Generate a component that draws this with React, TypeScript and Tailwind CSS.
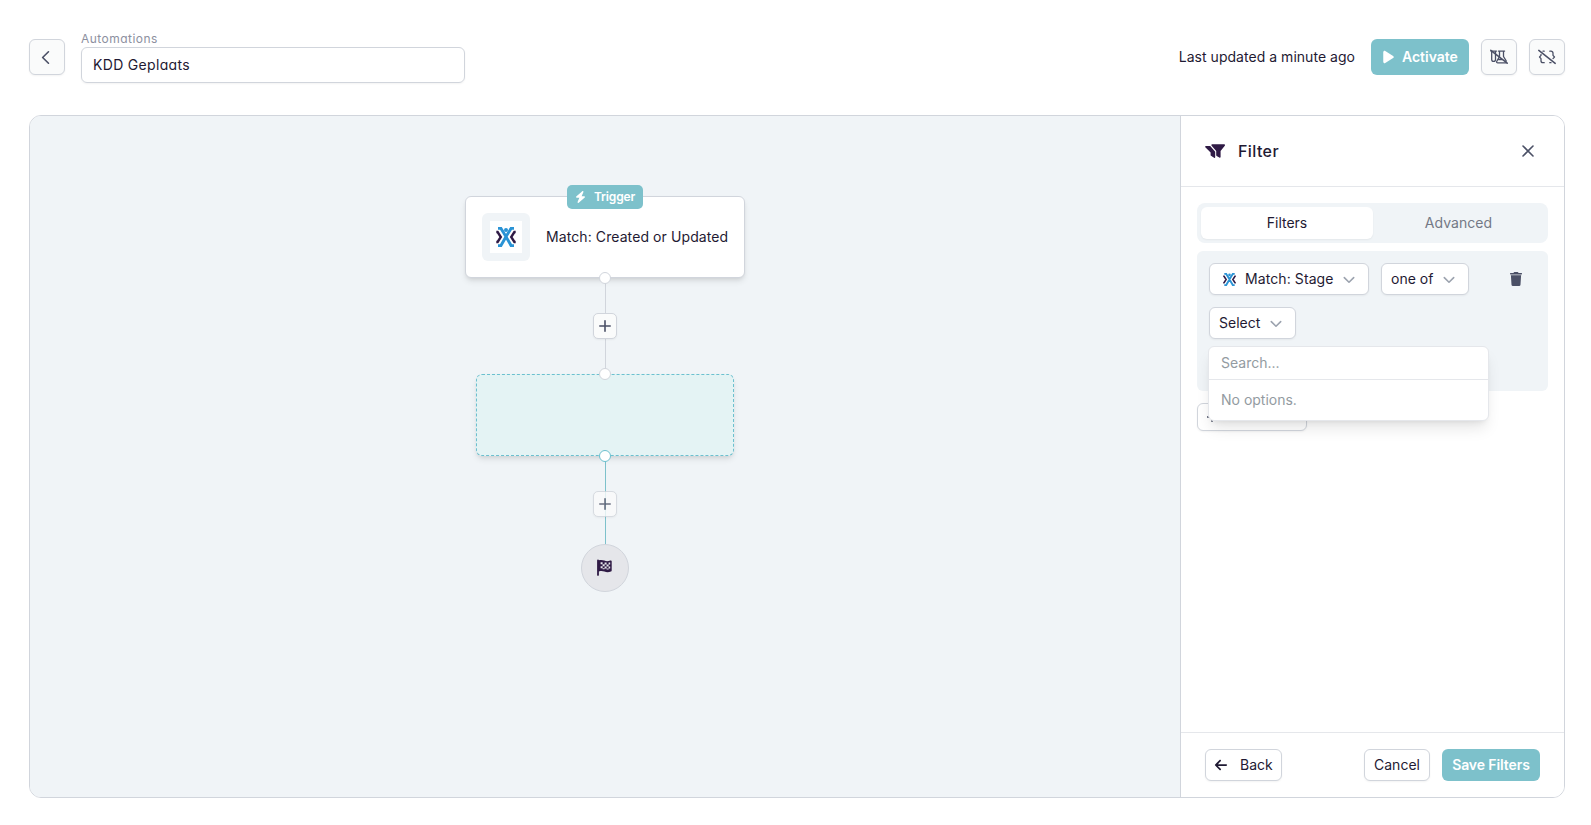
import React from "react";
import { FaPlay, FaBolt, FaArrowLeft } from "react-icons/fa6";

const round = "font-['Inter'] [font-feature-settings:'cv11','ss03']";

function Logo({ className }: { className: string }) {
  return (
    <svg viewBox="0 0 20 20" className={className} fill="none">
      <path d="M0.300 5h1.300L4.800 10l-3.200 5H.3M19.700 5h-1.300L15.200 10l3.200 5h1.300" stroke="#2f1a45" strokeWidth="2.4" />
      <path d="M2 1.200h2.800L9 8l6.200 10.800H18M18 1.200h-2.800L11 8 4.800 18.800H2" stroke="#2a93d5" strokeWidth="2.900" />
      <circle cx="10" cy="2.900" r="2" fill="#2a93d5" />
    </svg>
  );
}

function Chevron({ className = "ml-[11px]" }: { className?: string }) {
  return (
    <svg viewBox="0 0 12 8" className={`mt-[2px] h-2 w-3 ${className}`} fill="none" stroke="#9ca3af" strokeWidth="1.6" strokeLinecap="round" strokeLinejoin="round">
      <path d="M1.300 1.600L6 6.200l4.700-4.600" />
    </svg>
  );
}

function Handle({ className }: { className: string }) {
  return <div className={`absolute left-[569px] size-3 rounded-full border bg-white ${className}`} />;
}

function AddStep({ className }: { className: string }) {
  return (
    <button className={`absolute left-[563px] flex h-[26px] w-6 items-center justify-center rounded-[5px] border border-gray-300 bg-[#fafbfb] shadow-xs ${className}`}>
      <svg viewBox="0 0 12 12" className="size-3" stroke="#4b5066" strokeWidth="1.6" strokeLinecap="round">
        <path d="M6 .8v10.4M.8 6h10.4" />
      </svg>
    </button>
  );
}

const iconButton = "flex size-9 items-center justify-center rounded-md border border-gray-300 bg-[#fafbfb] shadow-xs";
const field = "flex h-8 items-center rounded-md border border-gray-300 bg-white text-[14px] shadow-xs";

export default function App() {
  return (
    <div className="flex h-[825px] w-[1591px] flex-col overflow-hidden bg-white pl-[29px] pr-[26px] font-['Inter',sans-serif] text-[14px] text-[#1f1a33]">
      <header className="flex h-[115px] shrink-0 items-start">
        <button className={`${iconButton} mt-[39px]`}>
          <svg viewBox="0 0 10 16" className="mr-[3px] h-[15px] w-[9px]" fill="none" stroke="#4b5066" strokeWidth="1.8" strokeLinecap="round" strokeLinejoin="round">
            <path d="M8.3 1.6L1.8 8l6.5 6.4" />
          </svg>
        </button>
        <div className="ml-4 mt-[31px] w-96">
          <div className={`h-4 text-[12px] leading-4 tracking-[0.46px] text-[#8d90a0] ${round}`}>Automations</div>
          <div className={`flex h-9 items-center rounded-md border border-gray-300 px-[11px] pb-px text-[14px] tracking-[0.32px] shadow-xs ${round}`}>KDD Geplaats</div>
        </div>
        <div className="ml-auto mt-[39px] flex h-9 items-center">
          <span className="mr-4 pb-0.5 tracking-[0.03px]">Last updated a minute ago</span>
          <button className="mr-3 flex h-9 w-[98px] items-center rounded-md bg-[#7dc1cb] pl-3 font-semibold text-white">
            <FaPlay className="mr-2 h-[14px] w-[11px]" />
            <span className="pb-0.5 tracking-[-0.02px]">Activate</span>
          </button>
          <button className={`${iconButton} mr-3`}>
            <svg viewBox="0 0 18 16" className="h-4 w-[18px]" fill="none" stroke="#4b5066" strokeWidth="1.3" strokeLinecap="round" strokeLinejoin="round">
              <path d="M1 2.100h5.500M1.700 2.100v8.400a1.900 1.900 0 0 0 3.800 0V2.100M8.400 2.100h6.200M9.500 2.100v5.400l-2.700 4.700c-.5.900 0 1.700 1 1.700h8.200M13.500 2.100v5.400l2.800 4.600M8 10.500h4" />
              <path d="M.8 1.300l16.400 12.900" strokeWidth="1.5" />
            </svg>
          </button>
          <button className={iconButton}>
            <svg viewBox="0 0 18 16" className="h-4 w-[18px]" fill="none" stroke="#4b5066" strokeWidth="1.3" strokeLinecap="round" strokeLinejoin="round">
              <path d="M6.2 2.2H5M3 5.4v1L1.5 8 3 9.6v2.1a2 2 0 0 0 2 2h1.2M11.800 2.200H13a2 2 0 0 1 2 2v2.2L16.5 8 15 9.6M13 13.7h-1.2" />
              <path d="M.8 1.4l16.4 13" strokeWidth="1.5" />
            </svg>
          </button>
        </div>
      </header>

      <main className="flex h-[683px] w-[1536px] shrink-0 overflow-hidden rounded-xl border border-gray-300">
        <section className="relative flex-1 bg-[#f0f4f7]">
          <div className="absolute left-[575px] top-[160px] h-[100px] w-px bg-gray-300" />
          <div className="absolute left-[575px] top-[340px] h-[90px] w-px bg-[#7dc1cb]" />

          <div className="absolute left-[435px] top-[80px] flex h-[82px] w-[280px] items-center rounded-md border border-gray-300 bg-white pl-4 shadow-md">
            <div className="flex size-12 items-center justify-center rounded-md bg-[#f0f4f7]">
              <div className="flex size-8 items-center justify-center bg-white">
                <Logo className="size-5" />
              </div>
            </div>
            <span className="ml-4 whitespace-nowrap pb-px tracking-[0.09px]">Match: Created or Updated</span>
          </div>
          <div className="absolute left-[537px] top-[69px] flex h-6 w-[76px] items-center rounded-[5px] bg-[#7dc1cb] pl-2 text-[12px] font-semibold text-white">
            <FaBolt className="mr-2 h-3 w-[11px]" />
            <span className="tracking-[-0.15px]">Trigger</span>
          </div>
          <Handle className="top-[156px] border-gray-300" />
          <AddStep className="top-[197px]" />

          <div className="absolute left-[446px] top-[258px] h-[82px] w-[258px] rounded-md border border-dashed border-[#6cc0cf] bg-[#e4f3f4] shadow-md" />
          <Handle className="top-[252px] border-gray-300" />
          <Handle className="top-[334px] border-[#6cc0cf]" />
          <AddStep className="top-[375px] opacity-80" />
          <div className="absolute left-[551px] top-[428px] flex size-12 items-center justify-center rounded-full border border-gray-300 bg-[#e5e6ea]">
            <svg viewBox="0 0 15 17" className="mb-px mr-px h-[17px] w-[15px]">
              <path d="M1 .5a.9.9 0 0 1 .9.800c2-.6 3.600-.4 5.500.3 2 .8 3.700.7 5.800-.1.700-.3 1.500.100 1.500.800v9.100c0 .5-.3.9-.8 1.100-2.200.9-4.300.9-6.500.1-1.900-.7-3.500-.7-5.500-.1v3.400a.9.9 0 0 1-1.800 0V1.400A.9.900 0 0 1 1 .5z" fill="#2f1a45" />
              <path d="M3.600 3.300h2v2h-2zM7.600 3.500h2v2h-2zM5.600 5.300h2v2h-2zM9.600 5.500h2v2h-2zM3.600 7.300h2v2h-2zM7.600 7.500h2v2h-2zM11.600 3.500h1.600v2h-1.600zM11.600 7.500h1.600v2h-1.600zM5.600 9.300h2v1h-2zM9.600 9.500h2v1h-2z" fill="#e5e6ea" />
            </svg>
          </div>
        </section>

        <aside className="flex w-[384px] flex-col border-l border-gray-300 bg-white">
          <div className="flex h-[71px] shrink-0 items-center border-b border-gray-200 pl-6 pr-[30px]">
            <svg viewBox="0 0 20 14" className="h-[14px] w-5 text-[#2f1a45]" fill="currentColor">
              <path d="M7.200.2h12c.8 0 1.100.9.600 1.500L15.600 7v6c0 .7-.7 1-1.300.6l-2.700-1.700c-.3-.2-.4-.5-.4-.8V7L6.600 1.700C6 1.100 6.400.2 7.200.2z" />
              <path d="M1 2h4.200l5 5.800v5.400c0 .6-.6.9-1.100.5L6 11.800c-.3-.2-.4-.4-.4-.7V8.600L.3 3.300C-.2 2.800.3 2 1 2z" />
            </svg>
            <span className={`ml-[13px] text-[16px] font-medium tracking-[0.4px] ${round}`}>Filter</span>
            <svg viewBox="0 0 12 12" className="mb-px ml-auto size-3" stroke="#4b5066" strokeWidth="1.6" strokeLinecap="round">
              <path d="M1 1l10 10M11 1L1 11" />
            </svg>
          </div>

          <div className="flex flex-1 flex-col items-start pl-4 pr-[15px] pt-4">
            <div className="flex h-10 w-[351px] rounded-lg bg-[#f0f4f7] p-1">
              <div className="flex w-[172px] items-center justify-center rounded-md bg-white pb-0.5 shadow-xs">Filters</div>
              <div className="flex flex-1 items-center justify-center pb-0.5 tracking-[0.05px] text-[#747986]">Advanced</div>
            </div>
            <div className="relative mt-2 h-[140px] w-[351px] rounded-md bg-[#f0f4f7] p-3">
              <div className="flex items-center">
                <div className={`${field} w-[160px] pl-[13px]`}>
                  <Logo className="h-[13px] w-[13px]" />
                  <span className="ml-[9px] pb-px tracking-[0.09px]">Match: Stage</span>
                  <Chevron className="ml-[9px]" />
                </div>
                <div className={`${field} ml-3 w-[88px] pl-[9px]`}>
                  <span className="-mr-px pb-px">one of</span>
                  <Chevron />
                </div>
                <svg viewBox="0 0 12 14" className="ml-[41px] h-[14px] w-3" fill="#4b5066">
                  <path d="M3.700.5C3.800.2 4.100 0 4.400 0h3.200c.3 0 .6.2.7.5l.2.400H11.500a.5.500 0 0 1 .5.500v.9H0v-.9A.5.500 0 0 1 .5.900h3zM.9 3.200h10.200l-.6 9.500A1.400 1.400 0 0 1 9.100 14H2.900a1.400 1.400 0 0 1-1.400-1.300z" />
                  <path d="M.5 2.200h11v1H.5z" opacity=".5" />
                </svg>
              </div>
              <div className={`${field} mt-3 w-[87px] pl-[9px]`}>
                <span className="-mr-px pb-px">Select</span>
                <Chevron />
              </div>
              <div className="absolute left-[11px] top-[95px] z-10 h-[75px] w-[281px] rounded-md border border-gray-200 bg-white text-[#939ba1] shadow-lg">
                <div className="flex h-[33px] items-center border-b border-gray-200 pb-0.5 pl-3">Search...</div>
                <div className="flex h-10 items-center pb-0.5 pl-3">No options.</div>
              </div>
            </div>
            <button className="mt-3 flex h-7 w-[110px] items-center rounded-md border border-gray-300 bg-white pl-[9px] shadow-xs">
              <svg viewBox="0 0 10 10" className="size-[10px]" stroke="#4b5066" strokeWidth="1.300">
                <path d="M5 0v10M0 5h10" />
              </svg>
            </button>
          </div>

          <div className="flex h-[65px] shrink-0 items-center border-t border-gray-200 pl-6 pr-6">
            <button className={`${field} w-[77px] pl-[8px]`}>
              <FaArrowLeft className="mr-3 size-[14px]" />
              <span className="pb-0.5">Back</span>
            </button>
            <button className={`${field} ml-auto mr-3 w-[66px] justify-center pb-0.5`}>Cancel</button>
            <button className="flex h-8 w-[98px] items-center justify-center rounded-md bg-[#7dc1cb] pb-0.5 font-semibold tracking-[-0.09px] text-white">Save Filters</button>
          </div>
        </aside>
      </main>
    </div>
  );
}
